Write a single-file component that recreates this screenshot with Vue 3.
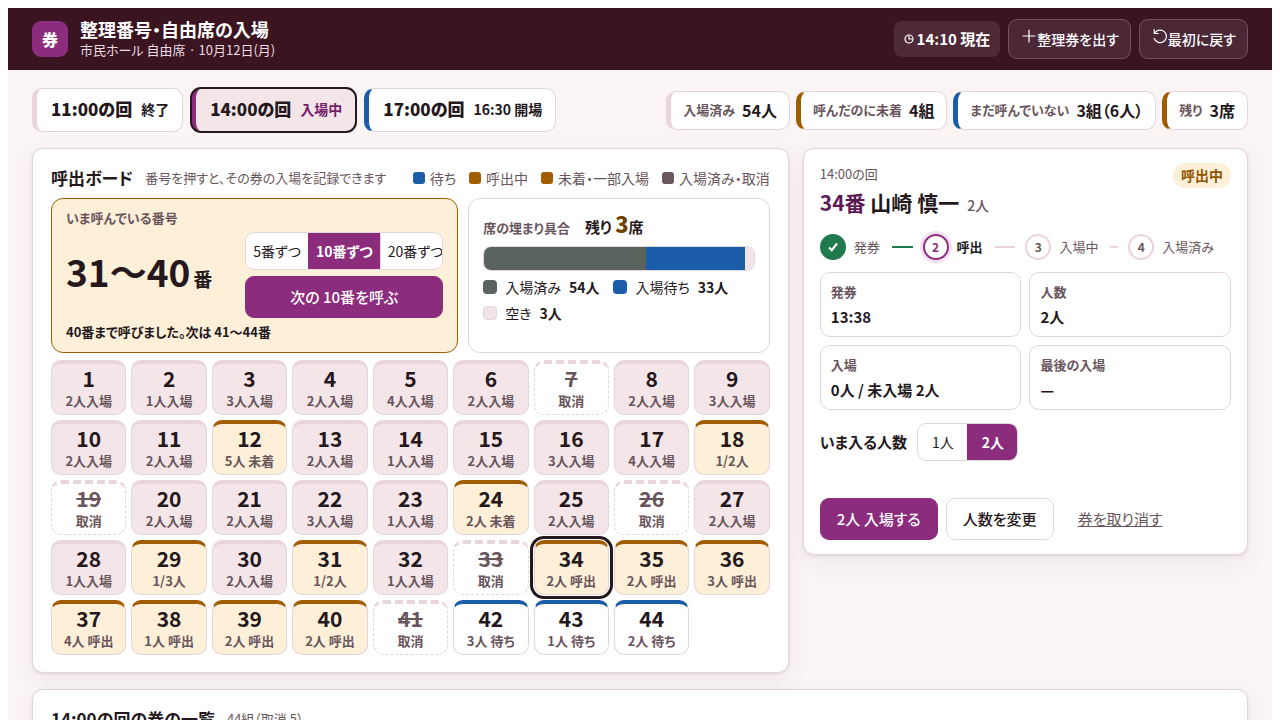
<script setup>
import { ref, computed } from 'vue'

const sessions = [
  { time: '11:00の回', note: '終了', tone: 'done' },
  { time: '14:00の回', note: '入場中', tone: 'now' },
  { time: '17:00の回', note: '16:30 開場', tone: 'wait' },
]
const session = ref(1)

const stats = [
  { label: '入場済み', value: '54人', tone: 'done' },
  { label: '呼んだのに未着', value: '4組', tone: 'call' },
  { label: 'まだ呼んでいない', value: '3組（6人）', tone: 'wait' },
  { label: '残り', value: '3席', tone: 'call' },
]

const legend = [
  { label: '待ち', tone: 'wait' },
  { label: '呼出中', tone: 'call' },
  { label: '未着・一部入場', tone: 'call' },
  { label: '入場済み・取消', tone: 'gone' },
]

const steps = [5, 10, 20]
const step = ref(10)

const seats = [
  { label: '入場済み', count: 54, tone: 'entered' },
  { label: '入場待ち', count: 33, tone: 'wait' },
  { label: '空き', count: 3, tone: 'free' },
]
const capacity = computed(() => seats.reduce((sum, s) => sum + s.count, 0))

const entered = [2, 1, 3, 2, 4, 2, 0, 2, 3, 2, 2, 0, 2, 1, 2, 3, 4, 0, 0, 2, 2, 3, 1, 0, 2, 0, 2, 1, 0, 2, 0, 1]
const others = {
  12: '5人 未着', 18: '1/2人', 24: '2人 未着', 29: '1/3人', 31: '1/2人',
  34: '2人 呼出', 35: '2人 呼出', 36: '3人 呼出', 37: '4人 呼出',
  38: '1人 呼出', 39: '2人 呼出', 40: '2人 呼出',
}
const waiting = { 42: 3, 43: 1, 44: 2 }
const cancelled = [7, 19, 26, 33, 41]

const tickets = Array.from({ length: 44 }, (_, i) => {
  const no = i + 1
  if (cancelled.includes(no)) return { no, note: '取消', tone: 'void' }
  if (others[no]) return { no, note: others[no], tone: 'call' }
  if (waiting[no]) return { no, note: `${waiting[no]}人 待ち`, tone: 'wait' }
  return { no, note: `${entered[i]}人入場`, tone: 'done' }
})
const selected = ref(34)

const stages = [
  { label: '発券', state: 'past' },
  { label: '呼出', state: 'current' },
  { label: '入場中', state: 'next' },
  { label: '入場済み', state: 'next' },
]

const facts = [
  { label: '発券', value: '13:38' },
  { label: '人数', value: '2人' },
  { label: '入場', value: '0人 / 未入場 2人' },
  { label: '最後の入場', value: '—' },
]
const party = ref(2)
</script>

<template>
  <div class="page">
    <header class="top">
      <div class="logo">券</div>
      <div class="brand">
        <h1>整理番号・自由席の入場</h1>
        <p>市民ホール 自由席 · 10月12日(月)</p>
      </div>
      <div class="top-tools">
        <div class="clock">
          <svg width="10" height="10" viewBox="0 0 10 10" fill="none" stroke="currentColor" stroke-width="1.2" aria-hidden="true"><circle cx="5" cy="5" r="4" /><path d="M5 1.5V5h3.5" /></svg>
          <span>14:10 現在</span>
        </div>
        <button type="button" class="ghost"><svg width="16" height="16" viewBox="0 0 16 16" fill="none" stroke="currentColor" stroke-width="1.2" stroke-linecap="round" aria-hidden="true"><path d="M8 2v12M2 8h12" /></svg>整理券を出す</button>
        <button type="button" class="ghost"><svg width="16" height="16" viewBox="0 0 16 16" fill="none" stroke="currentColor" stroke-width="1.2" stroke-linecap="round" stroke-linejoin="round" aria-hidden="true"><path d="M2.2 1.5v4h4M2.5 5.5A6.3 6.3 0 1 1 2.2 10.5" /></svg>最初に戻す</button>
      </div>
    </header>

    <main class="body">
      <div class="bar">
        <nav class="tabs">
          <button v-for="(s, i) in sessions" :key="s.time" type="button" class="tab" :class="[s.tone, { on: session === i }]" @click="session = i">
            <strong>{{ s.time }}</strong><span>{{ s.note }}</span>
          </button>
        </nav>
        <ul class="stats">
          <li v-for="s in stats" :key="s.label" :class="s.tone"><span>{{ s.label }}</span><strong>{{ s.value }}</strong></li>
        </ul>
      </div>

      <div class="columns">
        <section class="panel board">
          <div class="board-head">
            <h2>呼出ボード</h2>
            <p>番号を押すと、その券の入場を記録できます</p>
            <ul class="legend">
              <li v-for="l in legend" :key="l.label"><i :class="l.tone"></i>{{ l.label }}</li>
            </ul>
          </div>

          <div class="summary">
            <div class="calling">
              <div class="small-label">いま呼んでいる番号</div>
              <div class="calling-row">
                <div class="range">31〜40<small>番</small></div>
                <div class="calling-actions">
                  <div class="segment tight">
                    <button v-for="n in steps" :key="n" type="button" :class="{ on: step === n }" @click="step = n">{{ n }}番ずつ</button>
                  </div>
                  <button type="button" class="primary">次の {{ step }}番を呼ぶ</button>
                </div>
              </div>
              <div class="message">40番まで呼びました。次は 41〜44番</div>
            </div>

            <div class="fill">
              <div class="fill-head"><span class="small-label">席の埋まり具合</span><strong>残り <b>3</b>席</strong></div>
              <div class="meter">
                <i v-for="s in seats" :key="s.label" :class="s.tone" :style="{ width: (s.count / capacity) * 100 + '%' }"></i>
              </div>
              <ul class="fill-legend">
                <li v-for="s in seats" :key="s.label"><i :class="s.tone"></i>{{ s.label }}<strong>{{ s.count }}人</strong></li>
              </ul>
            </div>
          </div>

          <div class="tickets">
            <button v-for="t in tickets" :key="t.no" type="button" class="ticket" :class="[t.tone, { on: selected === t.no }]" @click="selected = t.no">
              <b>{{ t.no }}</b><span>{{ t.note }}</span>
            </button>
          </div>
        </section>

        <section class="panel detail">
          <div class="detail-head">
            <div>
              <p>14:00の回</p>
              <h2><em>34番</em> 山崎 慎一<small>2人</small></h2>
            </div>
            <span class="badge">呼出中</span>
          </div>

          <ol class="stages">
            <li v-for="(s, i) in stages" :key="s.label" :class="s.state">
              <span class="dot">
                <svg v-if="s.state === 'past'" width="12" height="12" viewBox="0 0 12 12" fill="none" stroke="currentColor" stroke-width="2.2" aria-hidden="true"><path d="M2 6.5 4.8 9.2 10 2.5" /></svg>
                <template v-else>{{ i + 1 }}</template>
              </span>
              <span class="stage-name">{{ s.label }}</span>
              <i v-if="i < 3" class="link"></i>
            </li>
          </ol>

          <dl class="facts">
            <div v-for="f in facts" :key="f.label"><dt>{{ f.label }}</dt><dd>{{ f.value }}</dd></div>
          </dl>

          <div class="party">
            <span>いま入る人数</span>
            <div class="segment">
              <button v-for="n in 2" :key="n" type="button" :class="{ on: party === n }" @click="party = n">{{ n }}人</button>
            </div>
          </div>

          <div class="actions">
            <button type="button" class="primary">{{ party }}人 入場する</button>
            <button type="button" class="secondary">人数を変更</button>
            <button type="button" class="text">券を取り消す</button>
          </div>
        </section>
      </div>

      <section class="panel list">
        <h2>14:00の回の券の一覧</h2>
        <p>44組（取消 5）</p>
      </section>
    </main>
  </div>
</template>

<style>
body {
  margin: 8px;
  background: #fff;
}
</style>

<style scoped>
.page {
  --ink: #24181c;
  --muted: #69555c;
  --line: #e3d6da;
  --pale: #e9d5da;
  --rose: #f4e5e9;
  --purple: #8c2c7c;
  --blue: #1c5da9;
  --amber: #a15c00;
  --cream: #fdefd8;
  background: #faf4f4;
  color: var(--ink);
  font-family: "Noto Sans CJK JP", sans-serif;
  font-feature-settings: "palt";
  font-size: 14px;
  line-height: 20px;
}
* { box-sizing: border-box; }
h1, h2, p, ul, ol, dl, dd { margin: 0; padding: 0; }
ul, ol { list-style: none; }
i, em { font-style: normal; }
button {
  font: inherit;
  font-feature-settings: inherit;
  color: inherit;
  margin: 0;
  white-space: nowrap;
  cursor: pointer;
}

.top {
  display: flex;
  align-items: center;
  gap: 12px;
  min-height: 62px;
  padding: 0 24px;
  background: #3b1422;
  color: #fff;
}
.logo {
  display: grid;
  place-items: center;
  width: 36px;
  height: 36px;
  border-radius: 9px;
  background: var(--purple);
  font-size: 16px;
  font-weight: 900;
}
.brand h1 { font-size: 18px; line-height: 22px; font-weight: 700; }
.brand p { font-size: 13px; line-height: 20px; color: #ecdce1; }
.top-tools { display: flex; align-items: center; gap: 8px; margin-left: auto; }
.clock {
  display: flex;
  align-items: center;
  gap: 3px;
  height: 36px;
  padding: 0 10px;
  border-radius: 8px;
  background: #4e2a38;
  font-size: 15px;
  font-weight: 700;
}
.ghost {
  height: 40px;
  padding: 0 11px 2px 12px;
  border: 1px solid #74525f;
  border-radius: 9px;
  background: #4c2735;
  color: #fff;
  font-size: 14px;
  font-weight: 500;
}
.ghost svg { vertical-align: 1px; }

.body { padding: 18px 24px 24px; }
.bar { display: flex; align-items: center; justify-content: space-between; gap: 12px; }
.tabs { display: flex; gap: 8px; }
.tab {
  display: flex;
  align-items: center;
  gap: 9px;
  height: 44px;
  padding: 0 13px 2px 14px;
  border: 1px solid var(--line);
  border-left: 5px solid var(--pale);
  border-radius: 10px;
  background: #fff;
  font-weight: 700;
}
.tab strong { font-size: 17px; }
.tab span { font-size: 14px; }
.tab.now { border-left-color: var(--purple); }
.tab.now span { color: #74206a; }
.tab.wait { border-left-color: var(--blue); }
.tab.on { background: var(--rose); outline: 2px solid var(--ink); outline-offset: -1px; }

.stats { display: flex; gap: 6px; }
.stats li {
  display: flex;
  align-items: center;
  gap: 7px;
  height: 39px;
  padding: 0 12px;
  border: 1px solid var(--line);
  border-left: 5px solid var(--pale);
  border-radius: 10px;
  background: #fff;
}
.stats span { color: var(--muted); font-size: 13px; font-weight: 700; }
.stats strong { font-size: 16px; }
.stats .call { border-left-color: var(--amber); }
.stats .wait { border-left-color: var(--blue); }

.columns {
  display: grid;
  grid-template-columns: 17fr 10fr;
  align-items: start;
  gap: 14px;
  margin: 16px 0;
}
.panel {
  min-width: 0;
  border: 1px solid var(--line);
  border-radius: 11px;
  background: #fff;
  box-shadow: 0 1px 3px rgba(59, 20, 34, 0.1), 0 8px 24px rgba(59, 20, 34, 0.05);
}
.panel h2 { font-size: 17px; line-height: 24px; font-weight: 700; }
.board { padding: 17px 18px; }
.board-head { display: flex; align-items: center; gap: 12px; margin-bottom: 8px; }
.board-head p { color: var(--muted); font-size: 13px; }
.legend { display: flex; gap: 13px; margin-left: auto; color: var(--muted); font-size: 14px; }
.legend li { display: flex; align-items: center; gap: 5px; }
.legend i { width: 12px; height: 12px; border-radius: 3px; }
i.wait { background: var(--blue); }
i.call { background: var(--amber); }
i.gone { background: #6b565e; }
i.entered { background: #5a635e; }
i.free { background: #f0e4e8; }

.summary { display: grid; grid-template-columns: 135fr 100fr; gap: 10px; }
.calling {
  display: grid;
  gap: 4px;
  padding: 9px 14px 10px;
  border: 1px solid #9c6000;
  border-radius: 12px;
  background: var(--cream);
}
.small-label { color: var(--muted); font-size: 13px; font-weight: 700; }
.calling-row { display: grid; grid-template-columns: 1fr 198px; align-items: center; }
.range { font-size: 37px; line-height: 48px; font-weight: 700; white-space: nowrap; }
.range small { margin-left: 3px; font-size: 19px; }
.calling-actions { display: grid; gap: 6px; min-width: 0; }
.message { font-size: 13px; font-weight: 700; }
.segment {
  display: flex;
  height: 38px;
  overflow: hidden;
  border: 1px solid var(--line);
  border-radius: 9px;
  background: #fff;
}
.segment button {
  flex: none;
  padding: 0 13px 0 14px;
  border: 0;
  border-left: 1px solid var(--line);
  background: none;
  font-size: 14px;
}
.segment button:first-child { border-left: 0; }
.segment .on { background: var(--purple); border-color: var(--purple); color: #fff; font-weight: 700; }
.segment.tight button { padding: 0 7px 1px; }
.primary, .secondary {
  height: 42px;
  padding: 0 16px;
  border: 1px solid var(--line);
  border-radius: 9px;
  background: #fff;
  font-size: 15px;
  font-weight: 500;
}
.primary { border-color: var(--purple); background: var(--purple); color: #fff; }

.fill { padding: 8px 14px; border: 1px solid var(--line); border-radius: 12px; }
.fill-head { display: flex; align-items: baseline; gap: 15px; line-height: 32px; }
.fill-head strong { font-size: 15px; }
.fill-head b { color: #6f4300; font-size: 22px; }
.meter {
  display: flex;
  height: 25px;
  margin: 2px 0 6px;
  overflow: hidden;
  border: 1px solid var(--line);
  border-radius: 8px;
}
.fill-legend { display: flex; flex-wrap: wrap; gap: 6px 14px; }
.fill-legend li { display: flex; align-items: center; }
.fill-legend i { width: 14px; height: 14px; margin-right: 8px; border-radius: 4px; }
.fill-legend i.free { border: 1px solid var(--line); }
.fill-legend strong { margin-left: 8px; }

.tickets { display: grid; grid-template-columns: repeat(9, 1fr); gap: 5px; margin-top: 7px; }
.ticket {
  display: flex;
  flex-direction: column;
  align-items: center;
  gap: 1px;
  height: 55px;
  padding: 2px 0 0;
  border: 1px solid var(--line);
  border-top: 4px solid var(--pale);
  border-radius: 10px;
  background: var(--rose);
}
.ticket b { font-size: 21px; line-height: 24px; }
.ticket span { color: var(--muted); font-size: 13px; line-height: 20px; font-weight: 700; }
.ticket.call { border-top-color: var(--amber); background: var(--cream); }
.ticket.wait { border-top-color: var(--blue); background: #fff; }
.ticket.void { border-style: dashed; background: #fff; }
.ticket.void b { color: var(--muted); text-decoration: line-through; }
.ticket.on { outline: 3px solid var(--ink); outline-offset: 1px; }

.detail { padding: 14px 16px; }
.detail-head { display: flex; align-items: flex-start; justify-content: space-between; }
.detail-head p { color: var(--muted); font-size: 13px; line-height: 22px; }
.detail-head h2 { font-size: 21px; line-height: 34px; }
.detail-head em { color: #5c1a52; }
.detail-head small { margin-left: 8px; color: var(--muted); font-size: 14px; font-weight: 500; }
.badge {
  padding: 2px 8px 3px;
  border-radius: 13px;
  background: var(--cream);
  color: #8f5500;
  font-size: 14px;
  font-weight: 700;
}
.stages { display: flex; margin: 12px 0; }
.stages li { flex: 1 1 0; min-width: 0; display: flex; align-items: center; color: var(--muted); font-size: 13px; }
.dot {
  display: grid;
  place-items: center;
  flex: none;
  width: 26px;
  height: 26px;
  border: 2px solid var(--pale);
  border-radius: 50%;
  font-size: 12px;
  font-weight: 700;
}
.stage-name { margin-left: 8px; white-space: nowrap; }
.link { flex: 1; height: 2px; margin: 0 10px 0 12px; background: var(--pale); }
.past .dot { border-color: #1f7a4d; background: #1f7a4d; color: #fff; }
.past .link { background: #1f7a4d; }
.current .dot { border-color: var(--purple); color: var(--purple); box-shadow: 0 0 0 3px #f3dff0; }
.current .stage-name { color: var(--ink); font-weight: 700; }

.facts { display: grid; grid-template-columns: 1fr 1fr; gap: 8px; }
.facts div { padding: 9px 10px; border: 1px solid var(--line); border-radius: 10px; }
.facts dt { color: var(--muted); font-size: 13px; font-weight: 700; }
.facts dd { margin-top: 4px; font-size: 15px; line-height: 21px; font-weight: 700; }
.party { display: flex; align-items: center; gap: 10px; margin: 13px 0 37px; font-size: 15px; font-weight: 700; }
.party .segment { font-weight: 400; }
.actions { display: flex; gap: 8px; }
.text {
  padding: 0 16px;
  border: 0;
  background: none;
  color: var(--muted);
  font-size: 15px;
  text-decoration: underline;
}

.list { display: flex; align-items: center; gap: 12px; padding: 17px 18px; }
.list p { color: var(--muted); font-size: 13px; }
</style>
